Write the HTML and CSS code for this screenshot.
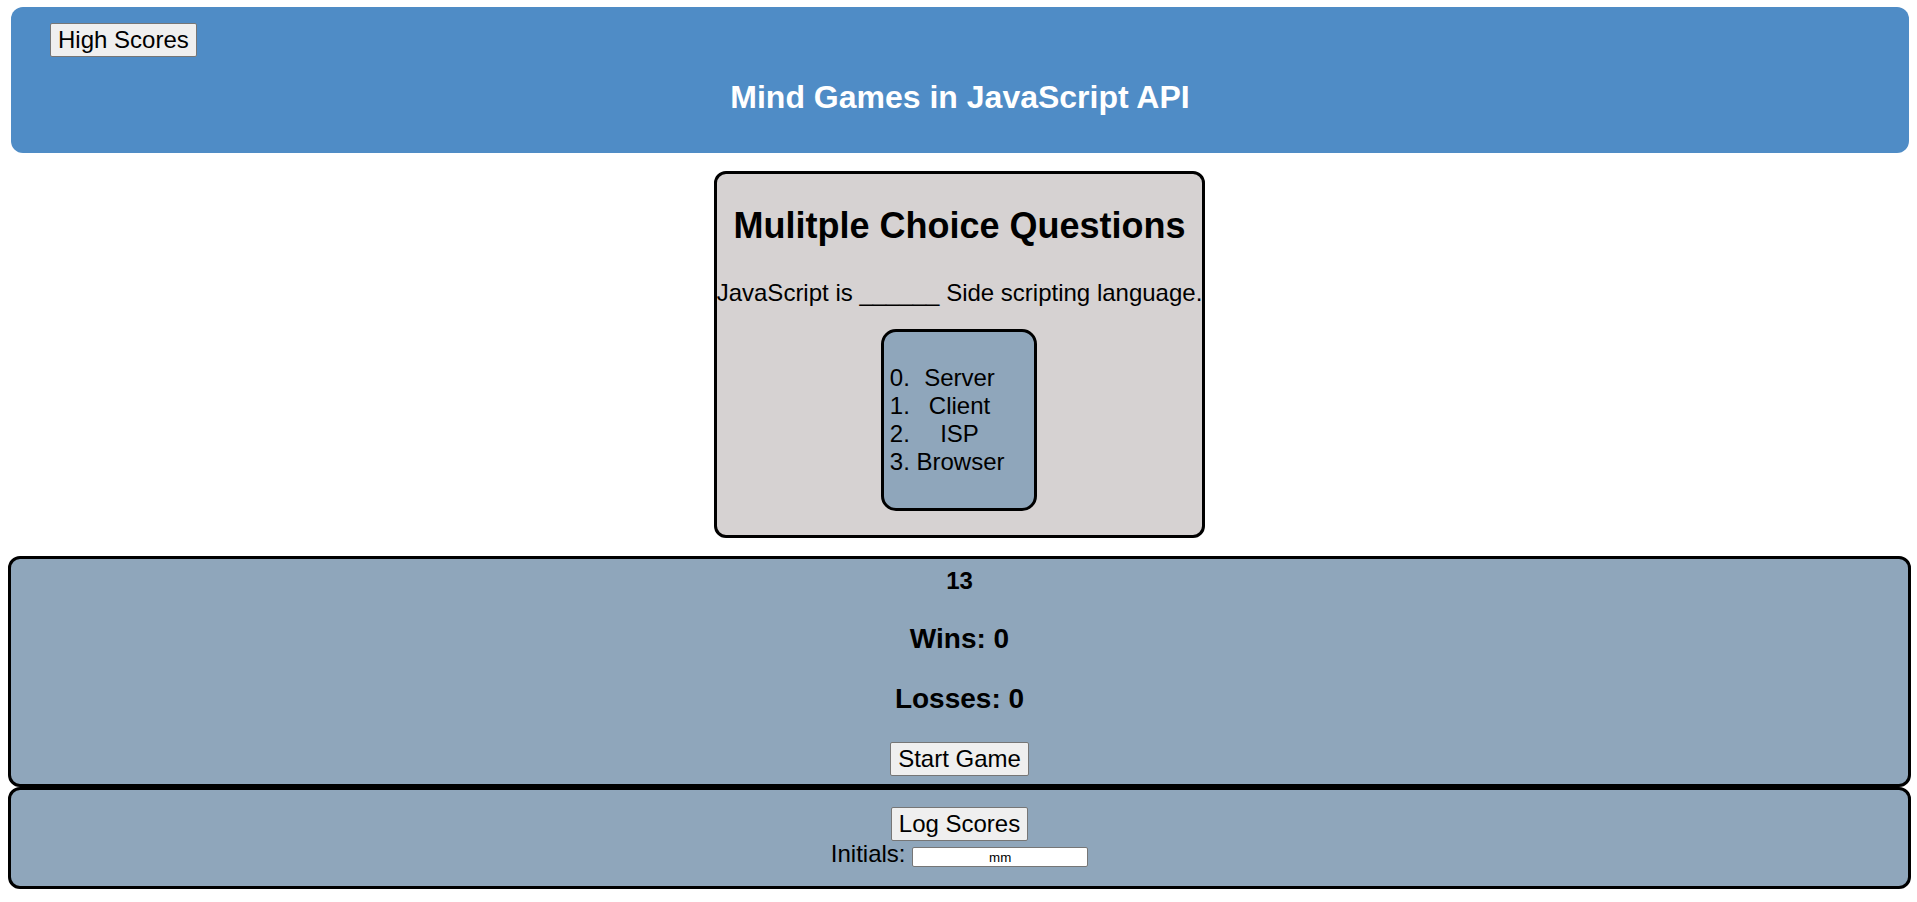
FILE: index.html
```html
<!DOCTYPE html>
<html lang="en">
<head>
<meta charset="utf-8">
<title>Mind Games in JavaScript API</title>
<link rel="stylesheet" href="styles.css">
</head>
<body>
  <header class="site-header">
    <div class="header-actions"><button class="btn" type="button">High Scores</button></div>
    <h1 class="site-title">Mind Games in JavaScript API</h1>
  </header>
  <main>
    <section class="quiz-card">
      <h2 class="quiz-title">Mulitple Choice Questions</h2>
      <p class="quiz-question">JavaScript is ______ Side scripting language.</p>
      <div class="choices-box">
        <ol class="choices" start="0">
          <li>Server</li>
          <li>Client</li>
          <li>ISP</li>
          <li>Browser</li>
        </ol>
      </div>
    </section>
    <section class="panel score-panel">
      <div class="timer">13</div>
      <h3 class="stat">Wins: 0</h3>
      <h3 class="stat">Losses: 0</h3>
      <div class="panel-action"><button class="btn" type="button">Start Game</button></div>
    </section>
    <section class="panel log-panel">
      <div class="log-action"><button class="btn" type="button">Log Scores</button></div>
      <div class="initials-row"><label for="initials">Initials:</label> <input id="initials" class="initials-input" type="text" value="mm"></div>
    </section>
  </main>
</body>
</html>
```

FILE: styles.css
```css
html, body {
  background: #ffffff;
}

body {
  margin: 0;
  padding: 7px 6px 0 8px;
  font-family: "Liberation Sans", Arial, sans-serif;
  font-size: 24px;
  color: #000000;
}

.btn {
  font-family: "Liberation Sans", Arial, sans-serif;
  font-size: 24px;
  line-height: normal;
  padding: 2px 7px;
  border: 1px solid #767676;
  border-radius: 2px;
  background: #efefef;
  color: #000000;
  margin: 0;
}

.site-header {
  margin: 0 2px 0 3px;
  padding: 16px 0 37px;
  background: #4f8cc6;
  border-radius: 12px;
}

.header-actions {
  padding-left: 39px;
}

.site-title {
  margin: 21.5px 0 0;
  font-size: 32px;
  font-weight: bold;
  line-height: normal;
  color: #ffffff;
  text-align: center;
}

.quiz-card {
  width: fit-content;
  margin: 18.5px auto 0;
  background: #d6d2d2;
  border: 3px solid #000000;
  border-radius: 12px;
  text-align: center;
}

.quiz-title {
  margin: 31px 0 29px;
  font-size: 36px;
  font-weight: bold;
  line-height: normal;
}

.quiz-question {
  margin: 32px 0 22px;
  white-space: nowrap;
}

.choices-box {
  width: 150px;
  margin: 0 auto 24px;
  background: #8fa6bb;
  border: 3px solid #000000;
  border-radius: 15px;
  text-align: left;
}

.choices {
  margin: 32px 32px 32px;
  padding: 0;
}

.choices li {
  text-align: center;
}

.panel {
  background: #8fa6bb;
  border: 3px solid #000000;
  border-radius: 12px;
  text-align: center;
}

.score-panel {
  margin-top: 17.5px;
  padding: 8px 0;
}

.timer {
  font-weight: bold;
}

.stat {
  margin: 28px 0 0;
  font-size: 28px;
  font-weight: bold;
  line-height: normal;
}

.panel-action {
  margin-top: 27px;
}

.log-panel {
  padding: 17px 0 19px;
}

.initials-row {
  line-height: 25.6px;
}

.initials-input {
  box-sizing: border-box;
  width: 176px;
  height: 20px;
  padding: 0 2px;
  border: 1px solid #767676;
  border-radius: 2px;
  background: #ffffff;
  font-family: "Liberation Sans", Arial, sans-serif;
  font-size: 13.33px;
  color: #000000;
  text-align: center;
}
```
